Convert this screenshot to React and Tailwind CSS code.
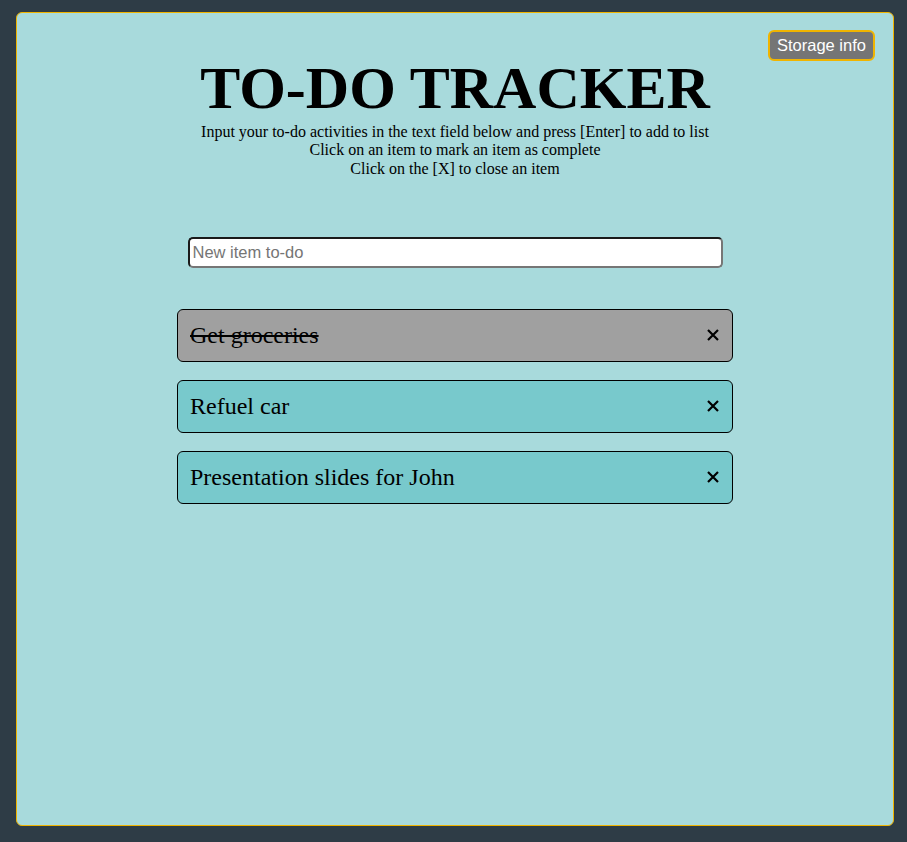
import React from "react";

function XIcon() {
  return (
    <svg width="12" height="12" viewBox="0 0 12 12" className="block">
      <path d="M1 1 L11 11 M11 1 L1 11" stroke="#000" strokeWidth="2.2" fill="none" />
    </svg>
  );
}

function Item({ text, done }) {
  return (
    <div
      className={`flex items-center justify-between h-[52.5px] w-[556px] border border-black rounded-[6px] pl-[12px] pr-[13px] ${
        done ? "bg-[#a0a0a0]" : "bg-[#78c9cc]"
      }`}
    >
      <span
        className={`text-[24px] text-black ${done ? "line-through decoration-[2px]" : ""}`}
        style={{ fontFamily: '"Liberation Serif", "Times New Roman", serif' }}
      >
        {text}
      </span>
      <XIcon />
    </div>
  );
}

export default function App() {
  return (
    <div className="w-[907px] h-[842px] bg-[#2e3c46] pt-[12px] pl-[16px] overflow-hidden">
      <div
        className="relative w-[878px] h-[814px] bg-[#a8dadc] border border-[#f0b400] rounded-[6px] flex flex-col items-center pt-[40px]"
        style={{ fontFamily: '"Liberation Serif", "Times New Roman", serif' }}
      >
        <button
          className="absolute top-[17px] right-[18px] w-[107px] h-[31px] bg-[#757575] text-white border-2 border-[#f0b400] rounded-[6px] text-[16.5px] leading-none flex items-center justify-center"
          style={{ fontFamily: '"Liberation Sans", Arial, sans-serif' }}
        >
          Storage info
        </button>
        <h1 className="text-[60px] font-bold leading-[70px] text-black">TO-DO TRACKER</h1>
        <div className="text-[16px] leading-[18.4px] text-black text-center">
          <div>Input your to-do activities in the text field below and press [Enter] to add to list</div>
          <div>Click on an item to mark an item as complete</div>
          <div>Click on the [X] to close an item</div>
        </div>
        <input
          type="text"
          placeholder="New item to-do"
          className="mt-[59px] w-[535px] h-[31px] bg-white border-2 border-t-[#1a1a1a] border-l-[#1a1a1a] border-r-[#767676] border-b-[#767676] rounded-[5px] px-[3px] text-[16.5px] placeholder:text-[#757575] outline-none"
          style={{ fontFamily: '"Liberation Sans", Arial, sans-serif' }}
        />
        <div className="mt-[41px] flex flex-col gap-[18.5px]">
          <Item text="Get groceries" done />
          <Item text="Refuel car" />
          <Item text="Presentation slides for John" />
        </div>
      </div>
    </div>
  );
}
